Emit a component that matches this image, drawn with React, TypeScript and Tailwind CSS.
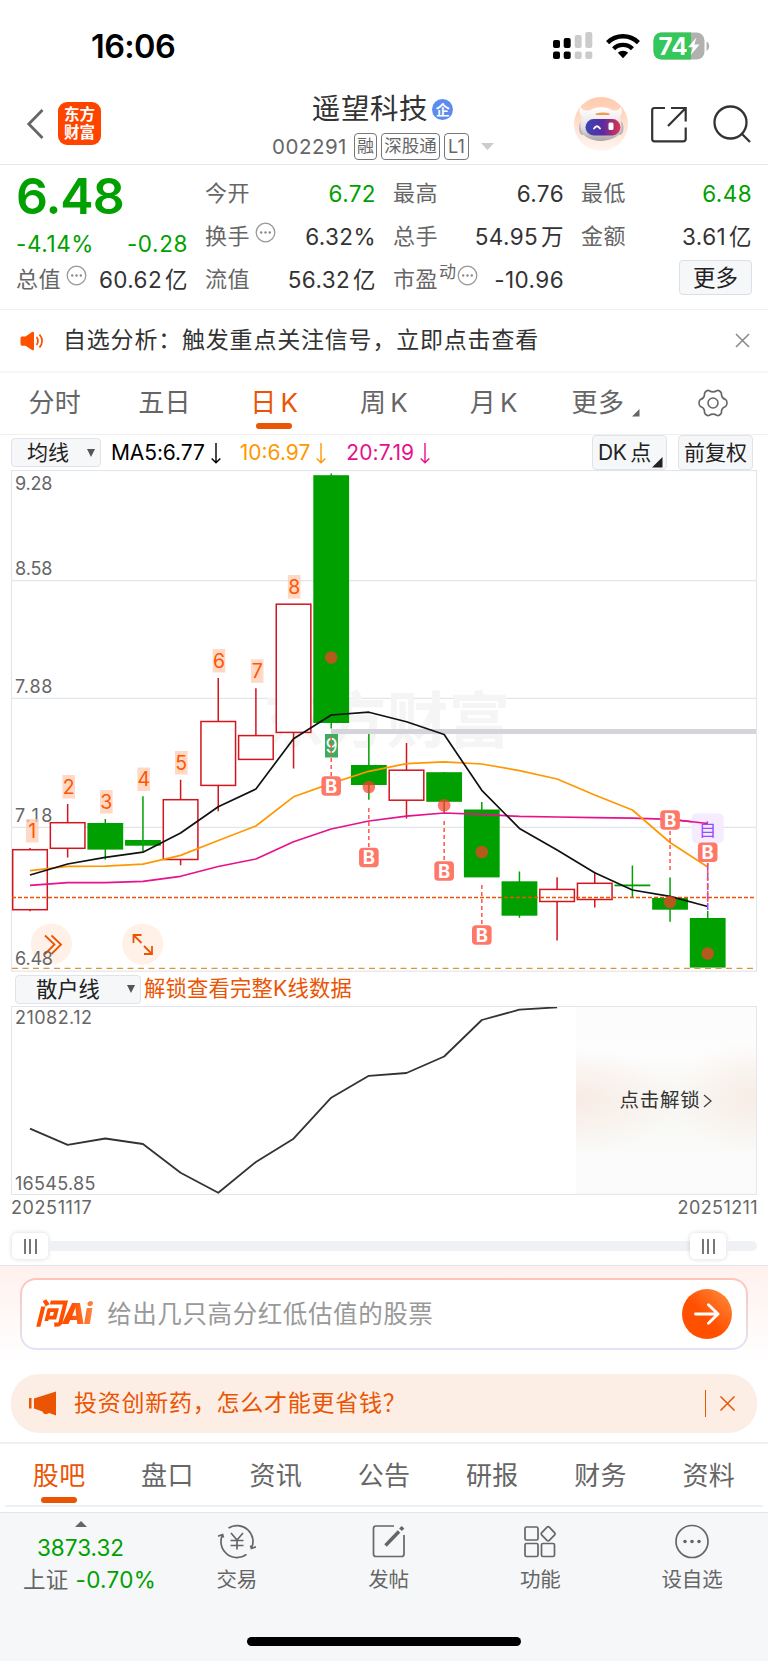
import type { ReactNode } from "react";

const STEP = 37.65;
const cx = (i: number) => 30 + i * STEP;

type Candle = { up: boolean; top: number; bottom: number; high: number; low: number };

const candles: Candle[] = [
  { up: true, top: 849.7, bottom: 909.7, high: 848, low: 911.3 },
  { up: true, top: 822.7, bottom: 848.3, high: 804, low: 857.5 },
  { up: false, top: 823, bottom: 849.6, high: 819, low: 859.6 },
  { up: false, top: 840, bottom: 845.7, high: 796.3, low: 851 },
  { up: true, top: 799.7, bottom: 859.5, high: 779.7, low: 865.3 },
  { up: true, top: 721.5, bottom: 785.4, high: 678, low: 811.3 },
  { up: true, top: 735.6, bottom: 759.4, high: 688.3, low: 759 },
  { up: true, top: 604.2, bottom: 732.4, high: 604, low: 768.5 },
  { up: false, top: 475.2, bottom: 723, high: 473.5, low: 728.5 },
  { up: false, top: 765, bottom: 785, high: 734, low: 799.7 },
  { up: true, top: 770.2, bottom: 800.2, high: 743, low: 818.6 },
  { up: false, top: 772.2, bottom: 801.8, high: 772, low: 812.5 },
  { up: false, top: 809.5, bottom: 877.4, high: 802, low: 877 },
  { up: false, top: 881.3, bottom: 915.7, high: 871.5, low: 917.8 },
  { up: true, top: 889.4, bottom: 901.5, high: 877.3, low: 940.5 },
  { up: true, top: 883.3, bottom: 899.5, high: 872, low: 907.6 },
  { up: false, top: 884.5, bottom: 886.3, high: 865.5, low: 897.3 },
  { up: false, top: 898, bottom: 909.7, high: 877.5, low: 921.7 },
  { up: false, top: 918, bottom: 967.6, high: 911, low: 967 },
];

const ma5 = [875, 864, 857.3, 852.2, 833, 806.8, 789, 738.7, 715, 712.2, 721.8, 734.5, 790.3, 828.4, 850, 872.8, 890, 896.4, 906.5];
const ma10 = [870.6, 866.4, 866.2, 864.2, 855.4, 840.5, 826, 796.8, 783.4, 771.3, 763.6, 761.8, 764, 770.6, 779, 795, 810, 842.5, 867];
const ma20 = [885.3, 882.7, 882.6, 881.3, 876.3, 866.5, 859, 841.8, 829, 821, 816.2, 813, 814.4, 816.4, 817, 817.6, 818.2, 819.3, 823.5];
const retail = [1128.6, 1144.8, 1138.5, 1144, 1172.8, 1192.8, 1162, 1138.7, 1097.7, 1075.8, 1073, 1056.5, 1020, 1009.7, 1007.3];

const toPoints = (ys: number[]) => ys.map((y, i) => `${cx(i)},${y}`).join(" ");

const counts = [
  { n: 1, x: 32.3, y: 819 },
  { n: 2, x: 68.7, y: 775 },
  { n: 3, x: 106.3, y: 790 },
  { n: 4, x: 143.7, y: 767.5 },
  { n: 5, x: 181.3, y: 751 },
  { n: 6, x: 219, y: 649 },
  { n: 7, x: 257.2, y: 659.3 },
  { n: 8, x: 294.2, y: 575 },
];

const buys = [
  { i: 8, y: 786, from: 737, to: 776 },
  { i: 9, y: 857.5, from: 808, to: 847 },
  { i: 11, y: 871, from: 821, to: 861 },
  { i: 12, y: 935, from: 885, to: 925 },
  { i: 17, y: 820, from: 831, to: 870 },
  { i: 18, y: 852.3, from: 863, to: 902 },
];

const dots = [
  { i: 8, y: 657.5 },
  { i: 9, y: 787 },
  { i: 11, y: 805.3 },
  { i: 12, y: 852 },
  { i: 17, y: 902 },
  { i: 18, y: 953.5 },
];

const prices = [
  { t: "9.28", y: 490.3 },
  { t: "8.58", y: 574.6 },
  { t: "7.88", y: 693.3 },
  { t: "7.18", y: 822 },
];

function StatusBar() {
  return (
    <div className="flex h-[92px] items-center justify-between pl-[91px] pr-[57px]">
      <span className="pt-[2px] text-[32.5px] font-semibold leading-[90px] tracking-[-0.6px] text-black">16:06</span>
      <div className="flex items-center gap-[13px]">
        <svg width="40" height="28" viewBox="0 0 40 28">
          <g fill="#000">
            <rect x="0" y="8" width="7" height="8" rx="2" />
            <rect x="10.7" y="6" width="7" height="10" rx="2" />
            <rect x="0" y="19.5" width="7" height="7.5" rx="2" />
            <rect x="10.7" y="19.5" width="7" height="7.5" rx="2" />
          </g>
          <g fill="#cbcbcb">
            <rect x="21.7" y="3" width="7" height="13" rx="2" />
            <rect x="32.3" y="0" width="7" height="16" rx="2" />
            <rect x="21.7" y="19.5" width="7" height="7.5" rx="2" />
            <rect x="32.3" y="19.5" width="7" height="7.5" rx="2" />
          </g>
        </svg>
        <svg width="34" height="26" viewBox="0 0 34 26">
          <g fill="none" stroke="#000" strokeWidth="4.4">
            <path d="M1.6 9.6a22 22 0 0 1 30.8 0" />
            <path d="M7.6 15.7a13.4 13.4 0 0 1 18.8 0" />
          </g>
          <path d="M17 25.2l-5.2-5.4a7.6 7.6 0 0 1 10.4 0z" />
        </svg>
        <svg width="58" height="28" viewBox="0 0 58 28">
          <defs>
            <clipPath id="cell">
              <rect x="0.5" y="0.5" width="51" height="27" rx="8" />
            </clipPath>
          </defs>
          <g clipPath="url(#cell)">
            <rect width="52" height="28" fill="#b1b1b1" />
            <rect width="38" height="28" fill="#34c759" />
          </g>
          <path d="M53.5 9.5c3.6 1.2 3.6 8 0 9.2z" fill="#b1b1b1" />
          <text x="5.5" y="22.5" fontSize="24" fontWeight="700" fill="#fff" textLength="29" lengthAdjust="spacingAndGlyphs">74</text>
          <path d="M43.5 5.5L35 15.3h4.9L37.7 23l8.8-10.4h-5.2z" fill="#fff" />
        </svg>
      </div>
    </div>
  );
}

function Robot() {
  return (
    <svg width="54" height="54" viewBox="0 0 54 54">
      <defs>
        <linearGradient id="halo" x1="0" y1="0" x2="0" y2="1">
          <stop offset="0" stopColor="#ffc9ab" />
          <stop offset="1" stopColor="#fff6f1" />
        </linearGradient>
        <linearGradient id="visor" x1="0" y1="0" x2="1" y2="0">
          <stop offset="0" stopColor="#3b46b4" />
          <stop offset="0.5" stopColor="#5a2ba0" />
          <stop offset="1" stopColor="#e2354f" />
        </linearGradient>
        <linearGradient id="shell" x1="0" y1="0" x2="0" y2="1">
          <stop offset="0" stopColor="#ffffff" />
          <stop offset="0.6" stopColor="#e6e1e3" />
          <stop offset="1" stopColor="#a9a2a6" />
        </linearGradient>
      </defs>
      <circle cx="27" cy="27" r="27" fill="url(#halo)" />
      <ellipse cx="8.500" cy="31" rx="3.500" ry="7" fill="#b9b4ba" />
      <ellipse cx="46" cy="31" rx="3.500" ry="7" fill="#b9b4ba" />
      <path d="M8 20C4.500 16 5 11 7 10c1.500 3 4 4 8 3.500C22 9 33 9 39 13.500c4 .5 6-.5 7.500-3.500 2 2 2 7-1 10.500 4 9 2 17-4.500 20-9 4.500-20 4.500-28 0C7 37 4.500 29 8 20z" fill="url(#shell)" />
      <rect x="11.500" y="22" width="35" height="16.500" rx="8.200" fill="url(#visor)" />
      <path d="M20 31.500q3-4.500 6 0" fill="none" stroke="#fff" strokeWidth="1.800" strokeLinecap="round" />
      <rect x="34.500" y="25.500" width="5" height="7.500" rx="1.500" fill="#fff" />
      <path d="M22 16.500q7-2.200 13.500 0v1.500h-14z" fill="#f29a52" />
    </svg>
  );
}

function Header() {
  return (
    <div className="flex h-[73px] items-start border-b-[1.5px] border-[#e6e6e6]">
      <div className="flex w-[260px] items-center gap-[14px] pl-[26px] pt-[10px]">
        <svg width="18" height="32" viewBox="0 0 18 32">
          <path d="M16.500 2L2.800 16l13.700 14" fill="none" stroke="#666" strokeWidth="2.800" />
        </svg>
        <div className="flex h-[43px] w-[43px] flex-col items-center justify-center rounded-[9px] bg-[#ff4400] text-[15.500px] font-bold leading-[17.500px] text-white">
          <span>东方</span>
          <span>财富</span>
        </div>
      </div>
      <div className="flex w-[248px] flex-col items-center">
        <div className="flex h-[34px] items-center gap-[4px] pr-[3px]">
          <span className="text-[28.500px] leading-[34px] tracking-[0.600px] text-[#333]">遥望科技</span>
          <span className="flex h-[21px] w-[21px] items-center justify-center rounded-full bg-[#5b8cee] text-[14px] font-bold text-white">企</span>
        </div>
        <div className="mt-[7px] flex h-[27px] items-center pr-[2px] text-[#666]">
          <span className="mr-[7px] text-[20.500px] leading-[27px] tracking-[0.500px]">002291</span>
          <span className="flex h-[27px] w-[23px] items-center justify-center rounded-[4px] border border-[#777] text-[17px]">融</span>
          <span className="ml-[4px] flex h-[27px] w-[59px] items-center justify-center rounded-[4px] border border-[#777] text-[17.500px]">深股通</span>
          <span className="ml-[4px] flex h-[27px] w-[25px] items-center justify-center rounded-[4px] border border-[#777] text-[18px]">L1</span>
          <svg className="ml-[12px]" width="13" height="7" viewBox="0 0 13 7">
            <path d="M0 0h13L6.500 7z" fill="#ccc" />
          </svg>
        </div>
      </div>
      <div className="flex flex-1 items-center pl-[66px] pt-[5px]">
        <Robot />
        <svg className="ml-[23px]" width="36" height="37" viewBox="0 0 36 37">
          <g fill="none" stroke="#333" strokeWidth="2.200">
            <path d="M14 2H3.500Q1.200 2 1.200 4.300V33Q1.200 35.300 3.500 35.300H32Q34.700 35.300 34.700 33V21.500" />
            <path d="M20 2H34.700V15.500M34 2.700L17 20" />
          </g>
        </svg>
        <svg className="ml-[26px]" width="38" height="38" viewBox="0 0 38 38">
          <g fill="none" stroke="#333" strokeWidth="2.300">
            <circle cx="17.500" cy="17.500" r="16" />
            <path d="M28.500 28.500L37 37" />
          </g>
        </svg>
      </div>
    </div>
  );
}

function Info() {
  return (
    <svg width="21" height="21" viewBox="0 0 21 21" className="mb-[9px] shrink-0">
      <circle cx="10.500" cy="10.500" r="9.300" fill="none" stroke="#999" strokeWidth="1.300" />
      <g fill="#888">
        <circle cx="6.200" cy="10.500" r="1.200" />
        <circle cx="10.500" cy="10.500" r="1.200" />
        <circle cx="14.800" cy="10.500" r="1.200" />
      </g>
    </svg>
  );
}

function Cell({ label, value, info, sup, green }: { label: string; value: string; info?: boolean; sup?: string; green?: boolean }) {
  const unit = value.match(/[万亿]$/);
  const num = unit ? value.slice(0, -1) : value;
  return (
    <div className="flex h-[43px] items-center text-[22px] leading-[43px] text-[#666]">
      <span className="tracking-[0.500px]">{label}</span>
      {sup && <span className="ml-[1px] mb-[14px] text-[17px] leading-[29px]">{sup}</span>}
      {info && <span className={sup ? "ml-[1px] flex" : "ml-[5px] flex"}><Info /></span>}
      <span className={green ? "ml-auto text-[22.500px] tracking-[0.400px] text-[#00a000]" : "ml-auto text-[22.500px] tracking-[0.400px] text-[#333]"}>
        {num}
        {unit && <span className="ml-[3px]">{unit[0]}</span>}
      </span>
    </div>
  );
}

function Quote() {
  return (
    <div className="grid h-[145px] grid-cols-[172px_171px_171px_171px] gap-x-[17px] border-b border-[#f0f0f0] pl-[16px] pt-[7px]">
      <div>
        <div className="flex h-[50px] items-center pb-[2px] text-[50px] font-semibold leading-[48px] tracking-[-1px] text-[#00a000]">6.48</div>
        <div className="flex h-[36px] items-center justify-between pt-[7px] text-[22.500px] tracking-[0.600px] text-[#00a000]">
          <span>-4.14%</span>
          <span>-0.28</span>
        </div>
        <Cell label="总值" value="60.62亿" info />
      </div>
      <div>
        <Cell label="今开" value="6.72" green />
        <Cell label="换手" value="6.32%" info />
        <Cell label="流值" value="56.32亿" />
      </div>
      <div>
        <Cell label="最高" value="6.76" />
        <Cell label="总手" value="54.95万" />
        <Cell label="市盈" sup="动" value="-10.96" info />
      </div>
      <div>
        <Cell label="最低" value="6.48" green />
        <Cell label="金额" value="3.61亿" />
        <div className="flex justify-end pt-[2px]">
          <div className="flex h-[35px] w-[73px] items-center justify-center rounded-[4px] border border-[#dcdfe6] bg-[#f6f7f9] text-[22.500px] text-[#222]">更多</div>
        </div>
      </div>
    </div>
  );
}

function Notice() {
  return (
    <div className="flex h-[63px] items-center border-b-2 border-[#f6f6f6] pl-[20px] pr-[18px]">
      <svg width="24" height="20" viewBox="0 0 24 20">
        <path d="M2 5.500h3.500L12 1q2-1 2 1.200v15.600q0 2.200-2 1.200L5.500 14.700H2Q.500 14.700.500 13V7Q.500 5.500 2 5.500z" fill="#ff4f00" />
        <path d="M16.500 6q3 4 0 8M19.500 3.500q5.200 6.500 0 13" fill="none" stroke="#ff4f00" strokeWidth="1.700" />
      </svg>
      <span className="ml-[19px] text-[23px] tracking-[0.800px] text-[#333]">自选分析：触发重点关注信号，立即点击查看</span>
      <svg className="ml-auto" width="15" height="15" viewBox="0 0 15 15">
        <path d="M1 1l13 13M14 1L1 14" stroke="#888" strokeWidth="1.500" />
      </svg>
    </div>
  );
}

function PeriodTab({ children, active }: { children: ReactNode; active?: boolean }) {
  return (
    <div className={active ? "flex flex-col items-center text-[#ea5504]" : "flex flex-col items-center text-[#666]"}>
      <div className="flex h-[50px] items-center gap-[4px] pt-[10px] text-[26px] leading-[50px] tracking-[0.300px]">{children}</div>
      {active && <div className="h-[6px] w-[36px] rounded-[3px] bg-[#ea5504]" />}
    </div>
  );
}

function Gear() {
  return (
    <svg width="30" height="28" viewBox="0 0 30 28">
      <g fill="none" stroke="#666" strokeWidth="1.600" strokeLinejoin="round">
        <path d="M11.300 1.700Q15 4 18.700 1.700Q20.200 1 21.600 2Q24 3.600 23.500 6.200Q24.300 9.700 27.600 10.500Q29 11.500 29 14Q29 16.500 27.600 17.500Q24.300 18.300 23.500 21.800Q24 24.400 21.600 26Q20.200 27 18.700 26.300Q15 24 11.300 26.300Q9.800 27 8.400 26Q6 24.400 6.500 21.800Q5.700 18.300 2.400 17.500Q1 16.500 1 14Q1 11.500 2.400 10.500Q5.700 9.700 6.500 6.200Q6 3.600 8.400 2Q9.800 1 11.300 1.700z" />
        <circle cx="15" cy="14" r="5" />
      </g>
    </svg>
  );
}

function PeriodTabs() {
  return (
    <div className="grid h-[62px] grid-cols-7 border-b border-[#f0f0f0]">
      <PeriodTab>分时</PeriodTab>
      <PeriodTab>五日</PeriodTab>
      <PeriodTab active><span>日</span><span>K</span></PeriodTab>
      <PeriodTab><span>周</span><span>K</span></PeriodTab>
      <PeriodTab><span>月</span><span>K</span></PeriodTab>
      <PeriodTab>
        <span className="pl-[5px]">更多</span>
        <svg className="ml-[4px] mt-[20px]" width="8" height="8" viewBox="0 0 8 8"><path d="M7.500 0v7.500H0z" fill="#666" /></svg>
      </PeriodTab>
      <PeriodTab><Gear /></PeriodTab>
    </div>
  );
}

function Average({ children }: { children: string }) {
  return (
    <span className="flex items-center gap-[6px]">
      <span>{children}</span>
      <svg width="10" height="21" viewBox="0 0 10 21">
        <path d="M5 0v19.500M.700 15.500L5 19.800l4.300-4.300" fill="none" stroke="currentColor" strokeWidth="1.400" />
      </svg>
    </span>
  );
}

function Caret() {
  return (
    <svg width="8" height="8" viewBox="0 0 8 8"><path d="M0 0h8L4 8z" fill="#555" /></svg>
  );
}

function MaRow() {
  return (
    <div className="flex h-[35px] items-center pl-[11px] pr-[15px] text-[21px] text-[#222]">
      <div className="flex h-[29px] w-[90px] items-center justify-between rounded-[4px] border border-[#e0e3e8] bg-[#f6f7f9] pl-[15px] pr-[5px] leading-[27px]">
        <span>均线</span>
        <Caret />
      </div>
      <div className="ml-[10px] flex pt-px tracking-[-0.100px] text-black"><Average>MA5:6.77</Average></div>
      <div className="ml-[19px] flex pt-px tracking-[0px] text-[#ff9800]"><Average>10:6.97</Average></div>
      <div className="ml-[20px] flex pt-px tracking-[0.100px] text-[#e6128c]"><Average>20:7.19</Average></div>
      <div className="ml-auto flex h-[35px] w-[75px] items-center rounded-[4px] border border-[#e0e3e8] bg-[#f6f7f9] pl-[5px]">
        <span className="tracking-[-0.500px]">DK</span>
        <span className="ml-[4px]">点</span>
        <svg className="ml-px mt-[19px]" width="11" height="11" viewBox="0 0 11 11"><path d="M10.500 0v10.500H0z" fill="#222" /></svg>
      </div>
      <div className="ml-[11px] flex h-[35px] w-[75px] items-center justify-center rounded-[4px] border border-[#e0e3e8] bg-[#f6f7f9]">前复权</div>
    </div>
  );
}

function KChart() {
  return (
    <svg className="block" width="768" height="502" viewBox="0 470 768 502">
      <g stroke="#dfe6ec" strokeWidth="1.200">
        <path d="M11 580.700H756.500M11 698.300H756.500M11 827.300H756.500" />
        <rect x="11.500" y="470.500" width="745" height="500.700" fill="none" stroke="#e2e5ec" />
      </g>
      <text x="263" y="743" fontSize="61.500" fontWeight="700" fill="#f5f5f5" textLength="247">东方财富</text>
      <path d="M331 731.400H756" stroke="#d3d5db" strokeWidth="5" />

      {candles.map((c, i) =>
        c.up ? (
          <g key={i} stroke="#d3151f" strokeWidth="1.500" fill="none">
            <path d={`M${cx(i)} ${c.high}V${c.top}M${cx(i)} ${c.bottom}V${c.low}`} />
            <rect x={cx(i) - 17.3} y={c.top} width="34.600" height={c.bottom - c.top} fill="#fff" />
          </g>
        ) : (
          <g key={i} fill="#00a000">
            <path d={`M${cx(i)} ${c.high}V${c.low}`} stroke="#00a000" strokeWidth="1.500" />
            <rect x={cx(i) - 17.9} y={c.top} width="35.800" height={c.bottom - c.top} />
          </g>
        ),
      )}

      <path d="M12 897.500H756" stroke="#ea5504" strokeWidth="1.400" strokeDasharray="4 2" />
      <path d="M12 968.400H756" stroke="#d9963f" strokeWidth="1.300" strokeDasharray="6 4.500" />

      <circle cx="51.500" cy="944" r="20.500" fill="#fff0e8" />
      <circle cx="142.700" cy="944" r="20.500" fill="#fff0e8" />
      <g fill="none" stroke="#ea5504" strokeWidth="1.800">
        <path d="M45 935.500l9.500 9-9.500 9.500M51.500 935.500l9.500 9-9.500 9.500" />
        <path d="M133.500 943v-8h8M133.500 935l8 8M152 946v8h-8M152 954l-8-8" />
      </g>

      <g fontSize="18" fill="#666">
        {prices.map((p) => (
          <text key={p.t} x="15" y={p.y} textLength="37.500">{p.t}</text>
        ))}
        <text x="15" y="965.300" textLength="38">6.48</text>
      </g>

      <g fill="none" strokeWidth="1.700" strokeLinejoin="round">
        <polyline points={toPoints(ma20)} stroke="#e6128c" />
        <polyline points={toPoints(ma10)} stroke="#ff9800" />
        <polyline points={toPoints(ma5)} stroke="#111" />
      </g>

      {counts.map((c) => (
        <g key={c.n}>
          <rect x={c.x - 6.3} y={c.y} width="12.600" height="23.500" fill="#ffc9ae" fillOpacity="0.700" />
          <text x={c.x} y={c.y + 18.800} fontSize="19.500" fill="#ff5500" textAnchor="middle">{c.n}</text>
        </g>
      ))}
      <rect x="325" y="734" width="13" height="23.500" fill="#3cad5e" />
      <text x="331.500" y="752.500" fontSize="19.500" fill="#fff" textAnchor="middle">9</text>

      <rect x="691.700" y="813.300" width="32" height="30" rx="5" fill="#f4eaff" fillOpacity="0.900" />
      <text x="707.500" y="836" fontSize="17.500" fill="#9a4dff" textAnchor="middle">自</text>
      <path d={`M${cx(17)} 819.300L${cx(18)} 823.500`} stroke="#e6128c" strokeWidth="1.600" />
      <path d={`M${cx(18)} 863V912`} stroke="#9a4dff" strokeWidth="1.600" strokeDasharray="7 3" />

      {buys.map((b) => (
        <g key={b.i}>
          <path d={`M${cx(b.i)} ${b.from}V${b.to}`} stroke="#ff5548" strokeWidth="1.500" strokeDasharray="4 3" />
          <rect x={cx(b.i) - 9.8} y={b.y - 9.8} width="19.600" height="19.600" rx="4" fill="#ff7767" />
          <text x={cx(b.i)} y={b.y + 6.800} fontSize="18.500" fontWeight="700" fill="#fff" textAnchor="middle">B</text>
        </g>
      ))}
      {dots.map((d) => (
        <circle key={d.i} cx={cx(d.i)} cy={d.y} r="6.300" fill="#ff3c28" fillOpacity="0.700" />
      ))}
    </svg>
  );
}

function RetailHeader() {
  return (
    <div className="flex h-[34px] items-center pl-[15px] text-[21.300px]">
      <div className="flex h-[29px] w-[126px] items-center justify-between rounded-[4px] border border-[#e0e3e8] bg-[#f6f7f9] pl-[20px] pr-[5px] text-[#222]">
        <span className="leading-[27px]">散户线</span>
        <Caret />
      </div>
      <span className="ml-[3px] tracking-[0.200px] text-[#ea5504]">解锁查看完整K线数据</span>
    </div>
  );
}

function RetailChart() {
  return (
    <div className="ml-[11px] flex h-[189px] w-[746px] border border-[#e2e5ec]">
      <svg className="block" width="564" height="187" viewBox="12 1007 564 187">
        <polyline points={toPoints(retail)} fill="none" stroke="#333" strokeWidth="1.800" strokeLinejoin="round" />
        <g fontSize="18" fill="#666">
          <text x="15" y="1024" textLength="77">21082.12</text>
          <text x="15" y="1189.800" textLength="80.500">16545.85</text>
        </g>
      </svg>
      <div className="flex flex-1 bg-[linear-gradient(to_bottom,#fcfcfc_0%,#fdfdfd_25%,#f8f6f2_50%,#f9f9f7_68%,#fbfbfb_85%,#fafafa_100%)]">
        <div className="flex flex-1 items-center justify-center gap-[3px] bg-[radial-gradient(ellipse_55%_28%_at_0%_50%,#f8ece5_0%,transparent_100%),radial-gradient(ellipse_45%_30%_at_100%_48%,#f7ede5_0%,transparent_100%)] text-[19.500px] tracking-[0.700px] text-[#333]">
          <span className="pt-px">点击解锁</span>
          <svg width="9" height="14" viewBox="0 0 9 14"><path d="M1 1l7 6-7 6" fill="none" stroke="#444" strokeWidth="1.400" /></svg>
        </div>
      </div>
    </div>
  );
}

function Handle() {
  return (
    <div className="flex h-[26px] w-[36px] items-center justify-center gap-[3.500px] rounded-[5px] bg-white shadow-[0_0_5px_rgba(0,0,0,0.160)]">
      <div className="h-[15px] w-[2px] bg-[#777]" />
      <div className="h-[15px] w-[2px] bg-[#777]" />
      <div className="h-[15px] w-[2px] bg-[#777]" />
    </div>
  );
}

function RangeSlider() {
  return (
    <div className="h-[71px] border-b border-[#e2e4ea] pl-[12px] pr-[11px]">
      <div className="-mx-px flex h-[23px] items-center justify-between pt-px text-[18px] text-[#666]">
        <span className="tracking-[0.600px]">20251117</span>
        <span className="tracking-[0.400px]">20251211</span>
      </div>
      <div className="mt-[15px] flex h-[26px] items-center">
        <Handle />
        <div className="h-[10px] flex-1 bg-[#f0f1f4]" />
        <Handle />
        <div className="h-[10px] w-[31px] rounded-r-full bg-[#f0f1f4]" />
      </div>
    </div>
  );
}

function AskAi() {
  return (
    <div className="h-[108px] bg-[linear-gradient(to_bottom,#fff1ed_0%,#ffffff_88%)] px-[20px] pt-[12px]">
      <div className="rounded-[16px] bg-[linear-gradient(to_bottom,#ffc3ba,#dfe5f8)] p-[2px]">
        <div className="flex h-[68px] items-center rounded-[14px] bg-white pl-[13px] pr-[14px]">
          <span className="bg-[linear-gradient(to_right,#ff5000_60%,#ff8a4a)] bg-clip-text pr-[4px] text-[29px] font-black italic leading-[40px] tracking-[-1.500px] text-transparent">问Ai</span>
          <span className="ml-[12px] text-[24.500px] tracking-[0.600px] text-[#999]">给出几只高分红低估值的股票</span>
          <div className="ml-auto flex h-[50px] w-[50px] items-center justify-center rounded-full bg-[linear-gradient(45deg,#ff5000_45%,#ff9040)]">
            <svg width="26" height="22" viewBox="0 0 26 22">
              <path d="M1.500 11H24M14.500 1.800L24 11l-9.500 9.200" fill="none" stroke="#fff" strokeWidth="2.900" strokeLinecap="round" strokeLinejoin="round" />
            </svg>
          </div>
        </div>
      </div>
    </div>
  );
}

function Banner() {
  return (
    <div className="mx-[11px] flex h-[59px] items-center rounded-[28px] bg-[#fdeee5] pl-[18px] pr-[22px]">
      <svg width="28" height="25" viewBox="0 0 28 25">
        <g fill="#ea5504">
          <rect x="0" y="7" width="2.500" height="10.500" />
          <path d="M5 7.500L27 .500V24.500L20 22q-2 1.500-4 1t-2.500-2.500L5 17.500z" />
        </g>
      </svg>
      <span className="ml-[17px] text-[23px] tracking-[0.750px] text-[#ea5504]">投资创新药，怎么才能更省钱？</span>
      <div className="ml-auto h-[27px] w-[1.500px] bg-[#ea5504]" />
      <svg className="ml-[14px]" width="15" height="15" viewBox="0 0 15 15">
        <path d="M.500.500l14 14M14.500.500l-14 14" stroke="#ea5504" strokeWidth="1.500" />
      </svg>
    </div>
  );
}

const sections = ["股吧", "盘口", "资讯", "公告", "研报", "财务", "资料"];

function SectionTabs() {
  return (
    <div className="mt-[9px] border-t-2 border-[#f0f0f2] px-[5px]">
      <div className="grid h-[63px] grid-cols-7 border-b-2 border-[#eef0f4]">
        {sections.map((s, i) => (
          <div key={s} className={i === 0 ? "flex flex-col items-center text-[#ea5504]" : "flex flex-col items-center text-[#666]"}>
            <span className="pt-[11px] text-[26px] leading-[42px] tracking-[0.300px]">{s}</span>
            {i === 0 && <div className="h-[6px] w-[36px] rounded-[3px] bg-[#ea5504]" />}
          </div>
        ))}
      </div>
    </div>
  );
}

function NavItem({ label, children }: { label: string; children: ReactNode }) {
  return (
    <div className="flex flex-1 flex-col items-center pt-[9px] text-[20.500px] text-[#666]">
      <svg width="38" height="38" viewBox="0 0 38 38" fill="none" stroke="#666" strokeWidth="1.700">{children}</svg>
      <span className="mt-[5px] leading-[30px]">{label}</span>
    </div>
  );
}

function BottomNav() {
  return (
    <div className="mt-[5px] flex h-[149px] flex-col border-t-[1.500px] border-[#e2e4e8] bg-[#f6f7f9]">
      <div className="flex h-[124px]">
        <div className="flex w-[161px] flex-col items-center pt-[8px] text-[22.500px] text-[#00a000]">
          <svg width="12" height="6" viewBox="0 0 12 6"><path d="M0 6L6 0l6 6z" fill="#666" /></svg>
          <span className="mt-[5px] leading-[32px]">3873.32</span>
          <span className="flex gap-[7px] pl-[18px] leading-[32px] tracking-[0.300px]">
            <span className="text-[#666]">上证</span>
            <span>-0.70%</span>
          </span>
        </div>
        <NavItem label="交易">
          <path d="M10.500 6A16 16 0 0 1 33.400 26.500M38 24.800L33.400 26.500L32.500 23.500" />
          <path d="M28.500 32.400A16 16 0 0 1 4.600 12.500M0 14.200L4.600 12.500L5.500 15.500" />
          <path d="M13 11l6 7 6-7M19 18v9.500M12.500 18.500h13M12.500 23.500h13" />
        </NavItem>
        <NavItem label="发帖">
          <path d="M24 4H6Q3.500 4 3.500 6.500V32Q3.500 34.500 6 34.500H31.500Q34 34.500 34 32V13" />
          <path d="M15.500 23.500L29 9.500" strokeWidth="3.500" />
          <path d="M30.500 7.800L33 5.200" strokeWidth="3.800" />
        </NavItem>
        <NavItem label="功能">
          <rect x="4" y="5" width="13" height="13" rx="1.500" />
          <rect x="4" y="21.500" width="13" height="13" rx="1.500" />
          <rect x="20.500" y="21.500" width="13" height="13" rx="1.500" />
          <path d="M26 5.200q1.200-1 2.300 0l5.400 5.700q.900 1 0 2l-5.400 5.400q-1.100 1-2.300 0l-5.400-5.400q-.900-1 0-2z" />
        </NavItem>
        <NavItem label="设自选">
          <circle cx="19" cy="19.500" r="16" />
          <g fill="#666" stroke="none">
            <circle cx="12" cy="19.500" r="1.800" />
            <circle cx="19" cy="19.500" r="1.800" />
            <circle cx="26" cy="19.500" r="1.800" />
          </g>
        </NavItem>
      </div>
      <div className="mx-auto h-[9px] w-[274px] rounded-full bg-black" />
    </div>
  );
}

export default function App() {
  return (
    <div className="flex h-[1662px] w-[768px] flex-col overflow-hidden bg-white font-['Inter','Noto_Sans_CJK_SC',sans-serif] whitespace-nowrap">
      <StatusBar />
      <Header />
      <Quote />
      <Notice />
      <PeriodTabs />
      <MaRow />
      <KChart />
      <RetailHeader />
      <RetailChart />
      <RangeSlider />
      <AskAi />
      <Banner />
      <SectionTabs />
      <BottomNav />
    </div>
  );
}
